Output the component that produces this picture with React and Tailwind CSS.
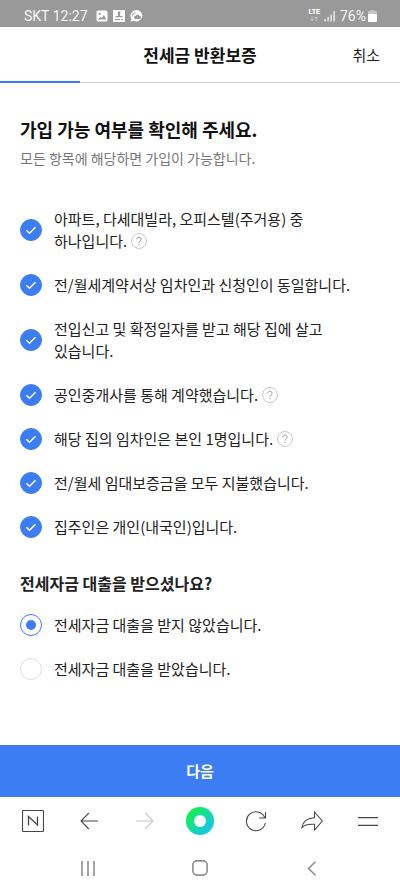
import React, { useState } from "react";

const CHECKS = [
  { text: ["아파트, 다세대빌라, 오피스텔(주거용) 중", "하나입니다."], help: true },
  { text: ["전/월세계약서상 임차인과 신청인이 동일합니다."] },
  { text: ["전입신고 및 확정일자를 받고 해당 집에 살고", "있습니다."] },
  { text: ["공인중개사를 통해 계약했습니다."], help: true },
  { text: ["해당 집의 임차인은 본인 1명입니다."], help: true },
  { text: ["전/월세 임대보증금을 모두 지불했습니다."] },
  { text: ["집주인은 개인(내국인)입니다."] },
];

const LOANS = ["전세자금 대출을 받지 않았습니다.", "전세자금 대출을 받았습니다."];

function StatusBar() {
  return (
    <div className="flex h-[27px] items-center justify-between bg-[#999999] pl-6 pr-[23px] pt-1 font-['Roboto',sans-serif] text-[14px] leading-[20px] text-white/90">
      <div className="flex items-center gap-2">
        <span>SKT 12:27</span>
        <div className="flex items-center gap-[5px]">
          <svg width="12" height="12" viewBox="0 0 12 12" aria-hidden="true">
            <rect x="0.5" y="0.5" width="11" height="11" rx="1.5" fill="#fff" />
            <circle cx="3.6" cy="3.8" r="1.1" fill="#999" />
            <path d="M1.8 9.6 4.3 6.8l1.3 1.2L8 5l2.3 4.6z" fill="#999" />
          </svg>
          <svg width="12" height="12" viewBox="0 0 12 12" aria-hidden="true">
            <rect width="12" height="12" fill="#fff" />
            <path d="M4.8 1.5h2.4v2.600L6.800 6h2.700v1.200h-7V6h2.700l-.4-1.900zM2 9h5v1H2zM8 9h2v1H8z" fill="#999" />
          </svg>
          <svg width="13" height="12" viewBox="0 0 13 12" aria-hidden="true">
            <path d="M6.5 0a5.9 5.7 0 1 1-2.7 10.8L.6 11.6l.9-2.7A5.9 5.7 0 0 1 6.5 0z" fill="#fff" />
            <path d="M5 9h4.600a1.500 1.500 0 0 0 0-3A2.300 2.300 0 0 0 5.600 5.900 1.600 1.600 0 0 0 5 9z" fill="#999" />
            <path d="M2.300 6.400a2 2 0 0 1 3.200-2.200M2.800 2.700l.7.7M5 1.600v1" fill="none" stroke="#999" strokeWidth="0.900" />
          </svg>
        </div>
      </div>
      <div className="flex items-center gap-1">
        <div className="flex flex-col items-center">
          <span className="text-[7px] font-black leading-[7px] text-white">LTE</span>
          <svg width="8" height="6" viewBox="0 0 8 6" fill="none" stroke="#d0d0d0" aria-hidden="true">
            <path d="M2 0.500v4M0.500 3.200 2 5l1.500-1.800M6 5V1M4.500 2.500 6 0.800l1.500 1.700" strokeWidth="0.800" />
          </svg>
        </div>
        <svg width="12" height="12" viewBox="0 0 12 12" fill="#fff" aria-hidden="true">
          <path d="M0.500 9h1.200v2.500H0.500zM3.500 7h1.200v4.500H3.500zM6.500 4.500h1.200v7H6.500zM9.500 1h1.200v10.500H9.500z" />
        </svg>
        <div className="flex items-center gap-[2px]">
          <span>76%</span>
          <svg width="9" height="12" viewBox="0 0 9 12" aria-hidden="true">
            <path d="M2.500 0h4v1H8a1 1 0 0 1 1 1v2H0V2a1 1 0 0 1 1-1h1.500z" fill="#c4c4c4" />
            <path d="M0 4h9v7a1 1 0 0 1-1 1H1a1 1 0 0 1-1-1z" fill="#fff" />
          </svg>
        </div>
      </div>
    </div>
  );
}

function HelpButton() {
  return (
    <button type="button" aria-label="도움말" className="ml-1 inline-block size-4 align-[-2px]">
      <svg width="16" height="16" viewBox="0 0 16 16" fill="none" aria-hidden="true" className="block">
        <circle cx="8" cy="8" r="7.500" stroke="#c6c8ca" />
        <path d="M5.900 6.300a2.100 2.100 0 1 1 3.300 1.700c-.8.500-1.200.8-1.200 1.700" stroke="#999c9f" />
        <circle cx="8" cy="11.400" r="0.700" fill="#999c9f" />
      </svg>
    </button>
  );
}

function CheckRow({ id, item }) {
  return (
    <li className="flex items-center gap-3">
      <span className="grid size-[22px] shrink-0">
        <input
          id={id}
          type="checkbox"
          defaultChecked
          className="peer col-start-1 row-start-1 size-[22px] appearance-none rounded-full border border-[#dddddd] checked:border-[#3c7df4] checked:bg-[#3c7df4]"
        />
        <svg
          viewBox="0 0 22 22"
          fill="none"
          aria-hidden="true"
          className="pointer-events-none col-start-1 row-start-1 hidden size-[22px] peer-checked:block"
        >
          <path d="m6.300 11.200 3.200 3.100 6-6" stroke="#fff" strokeWidth="1.500" />
        </svg>
      </span>
      <div>
        <label htmlFor={id}>
          {item.text.map((line, i) => (
            <React.Fragment key={line}>
              {i > 0 && <br />}
              {line}
            </React.Fragment>
          ))}
        </label>
        {item.help && <HelpButton />}
      </div>
    </li>
  );
}

function BrowserBar() {
  const line = { fill: "none", stroke: "#45484b", strokeWidth: 1.1 };
  return (
    <nav aria-label="브라우저" className="flex h-12 items-center justify-between pl-[18px] pr-[17px]">
      <button type="button" aria-label="네이버 홈" className="grid size-[30px] place-items-center">
        <svg width="22" height="22" viewBox="0 0 22 22" {...line}>
          <rect x="0.500" y="0.500" width="21" height="21" rx="1" />
          <path d="M6.500 15.500v-9l9 8.500v-8.500" strokeWidth="1.300" />
        </svg>
      </button>
      <button type="button" aria-label="뒤로" className="grid size-[30px] place-items-center">
        <svg width="18" height="18" viewBox="0 0 18 18" {...line}>
          <path d="M18 9H1M8.800 1 1 9l7.800 8" />
        </svg>
      </button>
      <button type="button" aria-label="앞으로" disabled className="grid size-[30px] place-items-center">
        <svg width="18" height="18" viewBox="0 0 18 18" {...line} stroke="#c8cacb">
          <path d="M0 9h17M9.200 1 17 9l-7.800 8" />
        </svg>
      </button>
      <button type="button" aria-label="그린닷" className="grid size-[30px] place-items-center">
        <span className="grid size-7 place-items-center rounded-full bg-linear-to-br from-[#12f03c] from-15% via-[#16dda0] via-50% to-[#1fc0f5] to-90%">
          <span className="size-3 rounded-full bg-white" />
        </span>
      </button>
      <button type="button" aria-label="새로고침" className="grid size-[30px] place-items-center">
        <svg width="22" height="22" viewBox="0 0 22 22" {...line}>
          <path d="M20.300 13A9.500 9.500 0 1 1 19.700 7.500M20.500 2v6h-6.300" />
        </svg>
      </button>
      <button type="button" aria-label="공유" className="grid size-[30px] place-items-center">
        <svg width="22" height="20" viewBox="0 0 22 20" {...line}>
          <path d="M13.500 1 21.300 10l-7.800 9v-5.700C7.500 12.800 4 13.300 1 16.500 2 10.500 6.500 7 13.500 6.800z" />
        </svg>
      </button>
      <button type="button" aria-label="메뉴" className="grid size-[30px] place-items-center">
        <svg width="20" height="9" viewBox="0 0 20 9" {...line}>
          <path d="M0 0.600h20M0 8.400h20" />
        </svg>
      </button>
    </nav>
  );
}

function SystemBar() {
  const line = { fill: "none", stroke: "#8d8d8d", strokeWidth: 1.6 };
  return (
    <nav aria-label="시스템" className="flex h-[46px] items-center justify-between px-[78px]">
      <button type="button" aria-label="최근 앱" className="grid size-5 place-items-center">
        <svg width="16" height="15" viewBox="0 0 16 15" {...line}>
          <path d="M2 0v15M8 0v15M14 0v15" />
        </svg>
      </button>
      <button type="button" aria-label="홈" className="grid size-5 place-items-center">
        <svg width="16" height="16" viewBox="0 0 16 16" {...line}>
          <rect x="0.900" y="0.900" width="14.200" height="14.200" rx="4" />
        </svg>
      </button>
      <button type="button" aria-label="이전" className="grid size-5 place-items-center">
        <svg width="10" height="15" viewBox="0 0 10 15" {...line}>
          <path d="M8.500 0.700 1.500 7.500l7 6.800" />
        </svg>
      </button>
    </nav>
  );
}

export default function App() {
  const [loan, setLoan] = useState(0);
  return (
    <div className="flex min-h-screen flex-col bg-white font-['Noto_Sans_CJK_KR',sans-serif] text-[15px] leading-[22px] text-[#222222]">
      <StatusBar />
      <header className="grid h-[56px] grid-cols-[1fr_auto_1fr] items-center border-b border-[#cfd3d6] px-5">
        <h1 className="col-start-2 text-[17px] font-bold text-[#111111]">전세금 반환보증</h1>
        <button type="button" className="justify-self-end">취소</button>
      </header>
      <div className="-mt-[2px] h-[2px] w-1/5 bg-[#3c7df4]" />

      <main className="flex-1 px-5 pt-[35px]">
        <h2 className="text-[18px] font-bold leading-[22px] text-[#111111]">가입 가능 여부를 확인해 주세요.</h2>
        <p className="mt-[7px] text-[14px] text-[#777777]">모든 항목에 해당하면 가입이 가능합니다.</p>
        <ul className="mt-[39px] flex flex-col gap-[22px]">
          {CHECKS.map((item, i) => (
            <CheckRow key={i} id={`check-${i}`} item={item} />
          ))}
        </ul>

        <fieldset className="mt-[34px]">
          <legend className="text-[16px] font-bold">전세자금 대출을 받으셨나요?</legend>
          <div className="flex flex-col gap-[22px] pt-5">
            {LOANS.map((text, i) => (
              <label key={text} className="flex items-center gap-3">
                <input
                  type="radio"
                  name="loan"
                  checked={loan === i}
                  onChange={() => setLoan(i)}
                  className="grid size-[22px] shrink-0 appearance-none place-items-center rounded-full border border-[#dddddd] before:size-[10px] before:rounded-full checked:border-[#3c7df4] checked:before:bg-[#3c7df4]"
                />
                {text}
              </label>
            ))}
          </div>
        </fieldset>
      </main>

      <button type="button" className="h-[52px] w-full bg-[#3c7df4] text-[15px] font-bold text-white">
        다음
      </button>
      <BrowserBar />
      <SystemBar />
    </div>
  );
}
